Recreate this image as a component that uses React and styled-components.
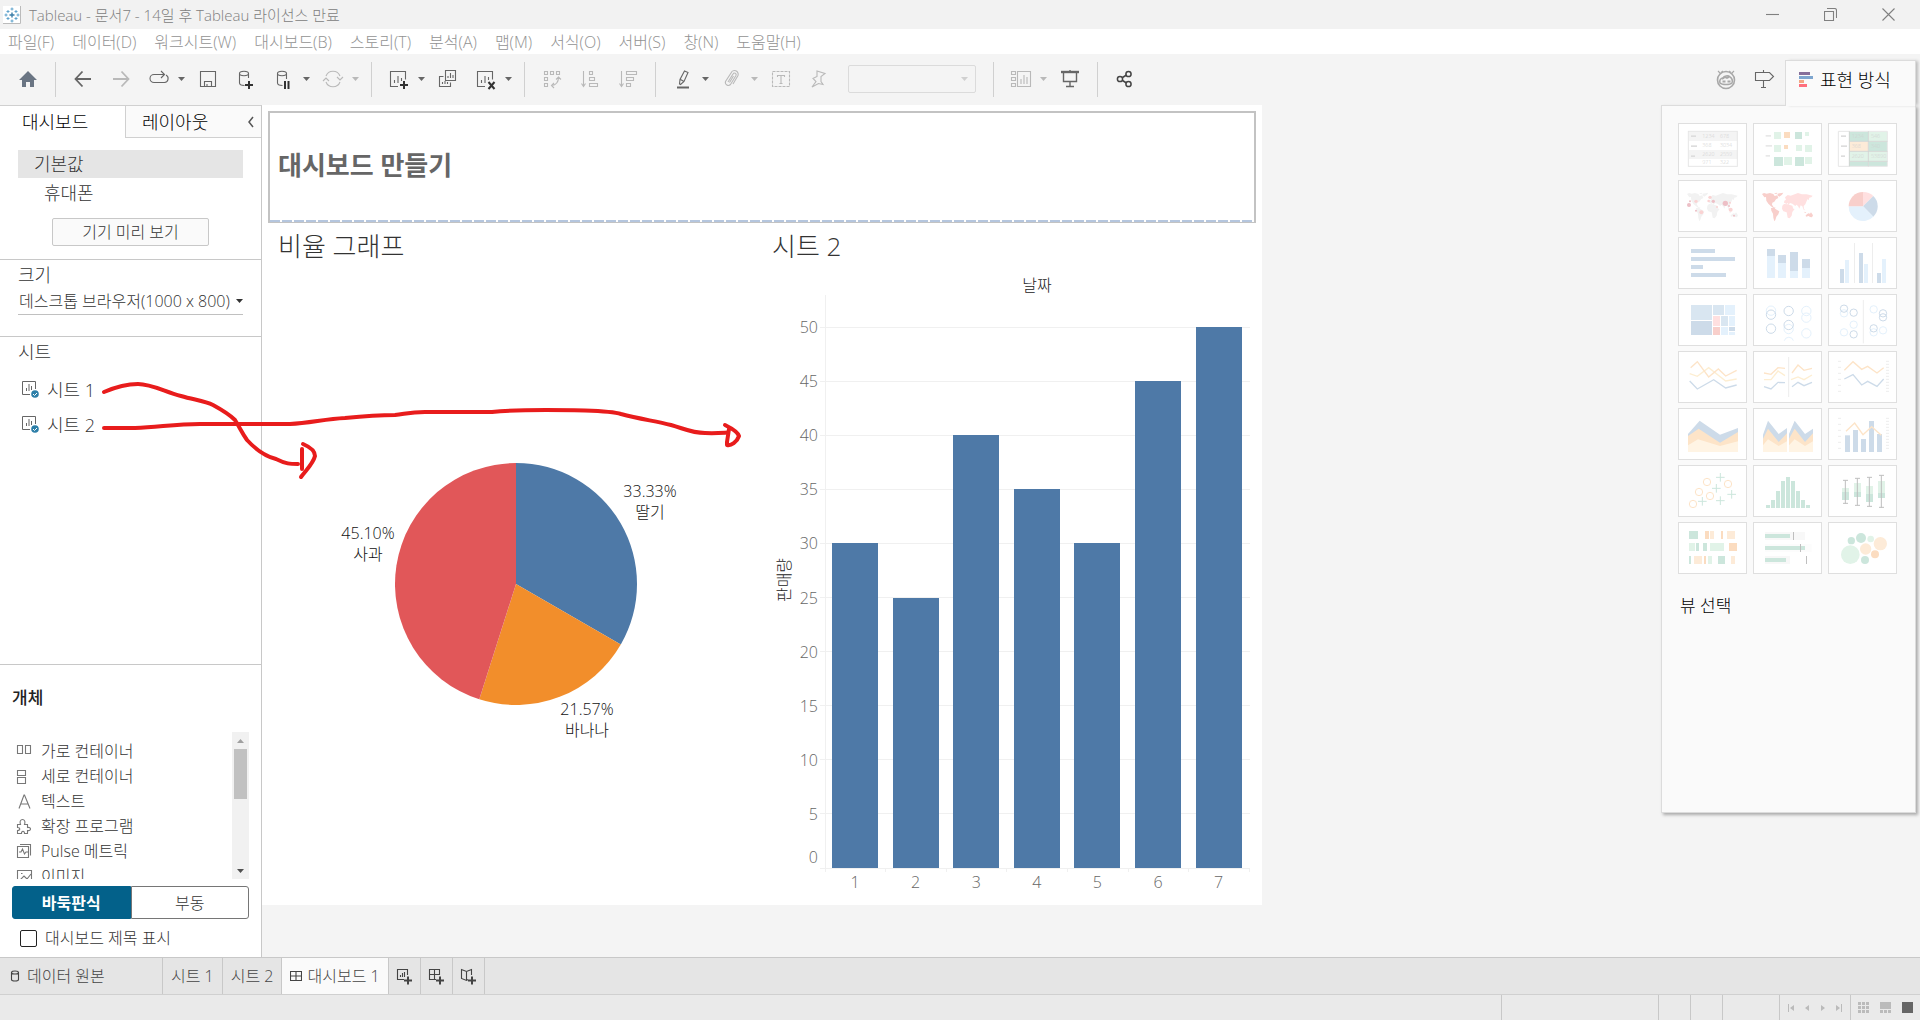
import { useState } from "react"
import styled, { createGlobalStyle } from "styled-components"

const GlobalStyle = createGlobalStyle`
  * {
    box-sizing: border-box;
  }

  body {
    margin: 0;
    background: #f4f4f4;
    color: #333;
    font-family: "Open Sans", "Noto Sans CJK KR", sans-serif;
    font-size: 16px;
    font-weight: 300;
    line-height: 24px;
  }

  button, select, input {
    font: inherit;
    color: inherit;
  }

  button {
    padding: 0;
    border: none;
    background: transparent;
    cursor: pointer;
  }

  svg {
    display: block;
    flex-shrink: 0;
  }
`

const Window = styled.div`
  min-height: 100vh;
  display: flex;
  flex-direction: column;
`

const TitleBar = styled.header`
  height: 29px;
  display: flex;
  align-items: center;
  gap: 8px;
  padding: 0 3px;
  background: #f2f2f2;
  color: #808080;
`

const WindowTitle = styled.h1`
  flex: 1;
  margin: 0;
  font-size: 15px;
  font-weight: 300;
`

const WindowButtons = styled.div`
  display: flex;
`

const WindowButton = styled.button`
  width: 58px;
  height: 29px;
  display: flex;
  align-items: center;
  justify-content: center;
`

const MenuBar = styled.nav`
  height: 25px;
  display: flex;
  align-items: center;
  gap: 18px;
  padding-left: 8px;
  background: #fff;
`

const MenuItem = styled.button`
  color: #929292;
  white-space: nowrap;
`

const ToolBar = styled.div`
  height: 51px;
  display: flex;
  align-items: center;
  padding: 0 4px 1px 9px;
  background: #f4f4f4;
`

const ToolButton = styled.button`
  width: 38px;
  height: 32px;
  display: flex;
  align-items: center;
  justify-content: center;
  color: ${(props) => (props.disabled ? "#b9b9b9" : "#666")};
`

const CaretButton = styled.button`
  width: 11px;
  height: 32px;
  display: flex;
  align-items: center;
  color: ${(props) => (props.disabled ? "#b9b9b9" : "#666")};
`

const Separator = styled.span`
  width: 1px;
  height: 35px;
  margin: 0 8px;
  background: #d0d0d0;
`

const FitSelect = styled.span`
  position: relative;
  width: 128px;
  height: 28px;
  margin: 0 9px 0 10px;
  color: #d0d0d0;

  select {
    display: block;
    width: 100%;
    height: 100%;
    appearance: none;
    border: 1px solid #d0d0d0;
    border-radius: 2px;
    background: transparent;
  }

  svg {
    position: absolute;
    right: 8px;
    top: 12px;
  }
`

const Spacer = styled.span`
  flex: 1;
`

const ShowMeTab = styled.button`
  position: relative;
  z-index: 1;
  align-self: flex-end;
  width: 131px;
  height: 46px;
  margin: 0 0 -2px 2px;
  display: flex;
  align-items: center;
  gap: 6px;
  padding: 0 0 7px 13px;
  border: 1px solid #dcdcdc;
  border-bottom: none;
  background: #fafafa;
  box-shadow: 3px 0 3px -1px #bbb;
  color: #000;
  font-size: 18px;
  white-space: nowrap;
`

const Main = styled.main`
  position: relative;
  flex: 1;
  display: flex;
  align-items: flex-start;
`

const Side = styled.aside`
  width: 262px;
  align-self: stretch;
  display: flex;
  flex-direction: column;
  border-top: 1px solid #d0d0d0;
  border-right: 1px solid #c8c8c8;
  background: #fff;
`

const SideTabs = styled.div`
  display: flex;
  height: 32px;
  color: #000;
  font-size: 18px;
`

const SideTab = styled.button`
  width: ${(props) => (props.$active ? "125px" : "auto")};
  flex: ${(props) => (props.$active ? "none" : 1)};
  padding-left: ${(props) => (props.$active ? "22px" : "16px")};
  border-left: ${(props) => (props.$active ? "none" : "1px solid #d0d0d0")};
  border-bottom: ${(props) => (props.$active ? "none" : "1px solid #d0d0d0")};
  background: ${(props) => (props.$active ? "#fff" : "#fafafa")};
  text-align: left;
  white-space: nowrap;
`

const CollapseButton = styled.button`
  width: 20px;
  display: flex;
  align-items: center;
  justify-content: center;
  border-bottom: 1px solid #d0d0d0;
  background: #fafafa;
  color: #555;
`

const Section = styled.section`
  padding: 3px 18px 21px;
  border-bottom: 1px solid #c8c8c8;
`

const DeviceSection = styled(Section)`
  display: flex;
  flex-direction: column;
  padding: 12px 18px 13px;
`

const SheetSection = styled(Section)`
  flex: 1;
`

const SectionTitle = styled.h2`
  margin: 0;
  font-size: 18px;
  font-weight: 300;
`

const Device = styled.button`
  height: 28px;
  margin-bottom: 1px;
  padding-left: ${(props) => (props.$active ? "16px" : "26px")};
  background: ${(props) => (props.$active ? "#e5e5e5" : "transparent")};
  font-size: 18px;
  text-align: left;
`

const PreviewButton = styled.button`
  width: 157px;
  height: 28px;
  margin-top: 10px;
  align-self: center;
  border: 1px solid #c8c8c8;
  border-radius: 2px;
  background: #fafafa;
`

const SizeSelect = styled.div`
  position: relative;
  height: 27px;
  margin-top: 1px;
  border-bottom: 1px solid #c0c0c0;

  select {
    display: block;
    width: 100%;
    height: 26px;
    padding: 0 0 0 1px;
    appearance: none;
    border: none;
    background: transparent;
  }

  svg {
    position: absolute;
    right: 0;
    top: 11px;
  }
`

const SheetList = styled.ul`
  margin: 8px 0 0;
  padding: 0 4px;
  list-style: none;
  font-size: 18px;
`

const SheetItem = styled.li`
  height: 35px;
  display: flex;
  align-items: center;
  gap: 8px;
`

const ObjectSection = styled.section`
  padding: 21px 12px 5px;
`

const ObjectTitle = styled.h2`
  margin: 0 0 22px;
  color: #222;
  font-size: 17px;
  font-weight: 500;
`

const ObjectBox = styled.div`
  height: 147px;
  display: flex;
  overflow: hidden;
`

const ObjectList = styled.ul`
  flex: 1;
  margin: 0;
  padding: 6px 0 0 4px;
  list-style: none;
`

const ObjectItem = styled.li`
  height: 25px;
  display: flex;
  align-items: center;
  gap: 8px;

  svg {
    color: #777;
  }
`

const ScrollBar = styled.div`
  width: 17px;
  display: flex;
  flex-direction: column;
  align-items: center;
  background: #f1f1f1;
  color: #a0a0a0;

  svg {
    margin: 7px 0 6px;
  }

  svg:last-child {
    margin-top: auto;
    color: #505050;
  }
`

const ScrollThumb = styled.span`
  width: 13px;
  height: 50px;
  background: #c1c1c1;
`

const LayoutSwitch = styled.div`
  height: 33px;
  display: flex;
  margin-top: 7px;
`

const LayoutButton = styled.button`
  flex: 1;
  border: 1px solid ${(props) => (props.$active ? "#03618a" : "#767676")};
  border-radius: ${(props) => (props.$active ? "3px 0 0 3px" : "0 3px 3px 0")};
  background: ${(props) => (props.$active ? "#03618a" : "#fff")};
  color: ${(props) => (props.$active ? "#fff" : "#333")};
  font-weight: ${(props) => (props.$active ? 700 : 300)};
`

const CheckLabel = styled.label`
  height: 28px;
  display: flex;
  align-items: center;
  gap: 8px;
  margin-top: 5px;
  padding-left: 8px;

  input {
    width: 17px;
    height: 17px;
    margin: 0;
    appearance: none;
    border: 1px solid #222;
    border-radius: 2px;
    background: #fff;
  }

  input:checked {
    background: #03618a;
  }
`

const Workspace = styled.div`
  flex: 1;
`

/* the dashboard has the "desktop browser" size chosen in the side panel */
const Dashboard = styled.article`
  width: 1000px;
  height: 800px;
  padding: 6px;
  background: #fff;
`

const TitleZone = styled.div`
  position: relative;
  height: 112px;
  display: flex;
  align-items: center;
  padding-left: 8px;
  border: 2px solid #c3c3c3;
  border-bottom-width: 1px;

  &::after {
    content: "";
    position: absolute;
    left: 0;
    right: 0;
    bottom: 0;
    height: 2px;
    background: repeating-linear-gradient(90deg, #b5c6de 0 10px, #fff 10px 12px);
  }

  h2 {
    margin: 0;
    padding-bottom: 6px;
    color: #666;
    font-size: 26px;
    font-weight: 700;
    line-height: 36px;
  }
`

const SheetRow = styled.div`
  display: grid;
  grid-template-columns: 1fr 1fr;
`

const SheetZone = styled.section`
  padding: 7px 0 0;

  h3 {
    margin: 0 0 2px;
    padding-left: 10px;
    font-size: 26px;
    font-weight: 300;
    line-height: 32px;
  }
`

const Chart = styled.svg`
  width: 100%;
  fill: #333;
`

const AxisText = styled.text`
  fill: #666;
  font-size: 16px;
`

const AxisTitle = styled.text`
  fill: #222;
  font-size: 16px;
  text-anchor: middle;
`

const MarkText = styled.text`
  fill: #111;
  font-size: 16px;
  text-anchor: middle;
`

const Ink = styled.svg`
  position: absolute;
  left: 0;
  top: 0;
  pointer-events: none;
  fill: none;
  stroke: #e81c1c;
  stroke-width: 4;
  stroke-linecap: round;
  stroke-linejoin: round;
`

const ShowMe = styled.aside`
  width: 255px;
  height: 708px;
  margin-right: 4px;
  padding: 17px 17px 0 16px;
  border: 1px solid #dcdcdc;
  background: #fafafa;
  box-shadow: 2px 2px 3px #aaa;
  color: #000;
`

const ThumbGrid = styled.div`
  display: grid;
  grid-template-columns: repeat(3, 69px);
  gap: 5px 6px;
`

const Thumb = styled.button`
  height: 52px;
  border: 1px solid #dfdfdf;
  background: #fff;
`

const ShowMeHint = styled.p`
  margin: 20px 2px;
  font-size: 17px;
`

const SheetTabs = styled.div`
  height: 38px;
  display: flex;
  border-top: 1px solid #c8c8c8;
  border-bottom: 1px solid #d0d0d0;
  background: #e5e5e5;
  color: #444;
`

const SheetTab = styled.button`
  min-width: ${(props) => (props.$wide ? "163px" : "32px")};
  display: flex;
  align-items: center;
  justify-content: ${(props) => (props.$wide ? "flex-start" : "center")};
  gap: 5px;
  padding: 0 ${(props) => (props.$icon ? "4px" : "8px")};
  border-right: 1px solid #c8c8c8;
  background: ${(props) => (props.$active ? "#fafafa" : "transparent")};
  white-space: nowrap;
`

const StatusBar = styled.footer`
  height: 25px;
  display: flex;
  justify-content: flex-end;
  background: #eaeaea;
  color: #bbb;
`

const StatusCell = styled.div`
  width: ${(props) => props.$width}px;
  display: flex;
  align-items: center;
  justify-content: space-between;
  padding: 0 ${(props) => props.$pad || 0}px;
  border-left: 1px solid #c8c8c8;
`

const Icon = ({ size = 24, children, width = 1.1 }) => (
  <svg width={size} height={size} viewBox={`0 0 ${size} ${size}`} fill="none" stroke="currentColor" strokeWidth={width}>
    {children}
  </svg>
)

const Caret = ({ up }) => (
  <svg width="7" height="4" viewBox="0 0 7 4" fill="currentColor">
    <path d={up ? "M0 4h7L3.5 0z" : "M0 0h7L3.5 4z"} />
  </svg>
)

const Plus = ({ x, y }) => <path d={`M${x - 4} ${y}h8M${x} ${y - 4}v8`} strokeWidth="2" stroke="#333" />

const icons = {
  home: <path d="M12 4l9 9h-3v7h-4v-5h-4v5H6v-7H3z" fill="#6a7583" stroke="none" />,
  back: <path d="M20 12H5M11.500 4.500L4.500 12l7 7.500" strokeWidth="1.800" />,
  forward: <path d="M4 12h15M12.500 4.500l7 7.500-7 7.500" strokeWidth="1.800" />,
  redo: <path d="M8 7.500H7a4 4 0 0 0 0 8h10.500a4 4 0 0 0 1.500-7.500M8 7.500h9M14 4l3.500 3.500L14 11" />,
  save: <path d="M4.500 4.500h15v15h-15zM8.500 19.500v-5h7v5M11 17v2" />,
  addData: (
    <>
      <path d="M14.500 11V6.500c0-3-9-3-9 0v9.500c0 1.500 2 2.500 5 2.500M5.500 6.500c0 3 9 3 9 0" />
      <Plus x={15} y={18} />
    </>
  ),
  pauseData: (
    <>
      <path d="M14.500 12V6.500c0-3-9-3-9 0v9.500c0 1.500 2 2.500 5 2.500M5.500 6.500c0 3 9 3 9 0" />
      <path d="M13 14v8M16.500 14v8" strokeWidth="2" stroke="#333" />
    </>
  ),
  refresh: <path d="M5 9a7.500 7.500 0 0 1 14 0M19 15a7.500 7.500 0 0 1-14 0M2 14l3-3 3 3M22 10l-3 3-3-3" />,
  newSheet: (
    <>
      <path d="M11 19.500H3.500v-15h15v8M7.500 16v-3M11 16V9M14.500 14v-3" />
      <Plus x={17} y={18} />
    </>
  ),
  duplicate: <path d="M9.500 3.500h10v10h-10zM12 11V9M14.500 11V6M17 11V8M7.500 9.500h-4v10h11v-4M6.500 17v-2M9 17v-3M11.500 17v-2" />,
  clear: (
    <>
      <path d="M11 19.500H3.500v-15h15v8M7.500 16v-3M11 16V9M14.500 13v-3" />
      <path d="M14.500 15l6 7M20.500 15l-6 7" strokeWidth="2" stroke="#333" />
    </>
  ),
  swap: <path d="M4.500 4.500h3v3h-3zM10.500 4.500h3v3h-3zM16.500 4.500h3v3h-3zM4.500 10.500h3v3h-3zM4.500 16.500h3v3h-3zM18.500 10c0 5-2 8-7 8.500M16 12.500l2.500-2.500 2.500 2.500M14 16l-2.500 2.500 2.500 2.500" />,
  sortAsc: <path d="M5.500 4v15M3.500 16.500l2 3 2-3M11.500 4.500h3v3h-3zM11.500 10.500h5v3h-5zM11.500 16.500h8v3h-8z" />,
  sortDesc: <path d="M5.500 4v15M3.500 16.500l2 3 2-3M10.500 4.500h10v3h-10zM10.500 10.500h7v3h-7zM10.500 16.500h4v3h-4z" />,
  highlight: (
    <>
      <path d="M13.500 4l3.500 1.500-4 9-3.500 3-1-.5.500-4.500zM9.500 12.500l3.500 2" />
      <path d="M6 20.500h12" strokeWidth="2" />
    </>
  ),
  clip: <path d="M8 15l5-8a1.500 1.500 0 0 1 3 1.500l-5.500 9a3 3 0 0 1-5-3L11 6a3.500 3.500 0 0 1 7 2.500L13 17M9.500 15.500l4-6.500" />,
  label: (
    <>
      <path d="M3.500 4.500h17v15h-17z" strokeDasharray="3 1" />
      <path d="M8.500 10V8.500h7V10M12 8.500v8M10.500 16.500h3" />
    </>
  ),
  pin: <path d="M10 4l8 2.500-4 3v5l2 3-4.500-1L5 20l4-5.500-3-3 4-2z" />,
  cards: <path d="M2.500 4.500h4v3h-4zM2.500 10.500h4v3h-4zM2.500 16.500h4v3h-4zM8.500 4.500h13v15h-13zM12 17v-5M15 17V8M18 17v-7" />,
  present: (
    <>
      <path d="M3 5h18" strokeWidth="2.400" />
      <path d="M5.500 6v8.500h13V6M12 14.500v5M8 19.500h8M12 3v2" strokeWidth="1.400" />
    </>
  ),
  share: (
    <g strokeWidth="1.500" stroke="#444">
      <circle cx="7" cy="12" r="2.600" />
      <circle cx="15.500" cy="7" r="2.600" />
      <circle cx="15.500" cy="17" r="2.600" />
      <path d="M9.500 10.500l4-2.500M9.500 13.500l4 2.500" />
    </g>
  ),
  einstein: (
    <g stroke="#a8a8a8">
      <circle cx="12" cy="13" r="8.500" strokeWidth="1.600" />
      <path d="M4 4l3 3M20 4l-3 3M7 5.500l2-1.500M17 5.500l-2-1.500" />
      <path d="M6 16c-1-3 1-5 3-5 1-2 5-3 7-1 2 1 3 4 2 6-2 2-10 2-12 0z" strokeWidth="1.600" />
      <path d="M8.500 14.500h3M13.500 14.500h3M8 12l3-2 2 1 2-1" strokeWidth="1.800" />
    </g>
  ),
  signpost: <path d="M11.500 3v3M3.500 5.500h14l4 4-4 4h-14zM11.500 13.500v7M9 20.500h5" />,
}

const Tool = ({ name, label, disabled, caret }) => (
  <>
    <ToolButton disabled={disabled} aria-label={label}>
      <Icon>{icons[name]}</Icon>
    </ToolButton>
    {caret && (
      <CaretButton disabled={disabled} aria-label={`${label} 옵션`}>
        <Caret />
      </CaretButton>
    )}
  </>
)

const TableauLogo = () => (
  <svg width="18" height="18" viewBox="0 0 18 18" fill="none">
    <path d="M0 0h18v18H0z" fill="#fff" />
    <path d="M17.500 0v17.500H0" stroke="#bbb" />
    <path d="M9 6.500v5M6.500 9h5" stroke="#3b7ea8" strokeWidth="1.400" />
    <path
      d="M9 1.500v3M7.500 3h3M9 13.500v3M7.500 15h3M3 7.500v3M1.500 9h3M15 7.500v3M13.500 9h3M5 4v3M3.500 5.500h3M13 4v3M11.500 5.500h3M5 11v3M3.500 12.500h3M13 11v3M11.500 12.500h3"
      stroke="#5fa3cc"
    />
  </svg>
)

const SheetIcon = () => (
  <svg width="17" height="17" viewBox="0 0 17 17" fill="none" stroke="#666">
    <path d="M8 13.500H.500V.500h13V8M4.500 10V7M7 10V3M9.500 9V5" />
    <circle cx="13" cy="13" r="3.800" fill="#2d7fa8" stroke="none" />
    <path d="M11 13l1.500 1.500L15 12" stroke="#fff" />
  </svg>
)

const objectItems = [
  { label: "가로 컨테이너", icon: <path d="M1.500 3.500h5v8h-5zM9.500 3.500h5v8h-5z" /> },
  { label: "세로 컨테이너", icon: <path d="M1.500 3.500h8v5h-8zM1.500 10.500h8v6h-8z" /> },
  { label: "텍스트", icon: <path d="M3 16.500L8 3h.500L14 16.500M5 12h7" /> },
  {
    label: "확장 프로그램",
    icon: <path d="M1.500 7.500h3c-1-3 0-5 2-5s3 2 2 5h3v3c4-1 4 4 0 3v3h-3c0-3-3-3-3 0h-4v-3c3 0 3-3 0-3z" />,
  },
  { label: "Pulse 메트릭", icon: <path d="M1.500 4.500h11v11h-11zM4 2.500h10.500v11M3 10h2l1.500-3 2 5 1.500-2h2" /> },
  { label: "이미지", icon: <path d="M1.500 3.500h14v12h-14zM4 13l4-4 3 3 4-5M5 6.500h1.500" /> },
]

const menus = ["파일(F)", "데이터(D)", "워크시트(W)", "대시보드(B)", "스토리(T)", "분석(A)", "맵(M)", "서식(O)", "서버(S)", "창(N)", "도움말(H)"]

const sales = [30, 25, 40, 35, 30, 45, 50]
const ticks = [50, 45, 40, 35, 30, 25, 20, 15, 10, 5, 0]

const BarChart = () => {
  const left = 63
  const base = 604
  const step = 60.6
  const scale = 10.82

  return (
    <Chart viewBox="0 0 494 630" role="img" aria-label="날짜별 판매량">
      <AxisTitle x="275" y="27">날짜</AxisTitle>
      <AxisTitle transform="translate(28 316) rotate(-90)">판매량</AxisTitle>
      <g stroke="#f0f0f0" shapeRendering="crispEdges">
        {ticks.map((tick) => (
          <line key={tick} x1="58" x2="488" y1={base - tick * scale} y2={base - tick * scale} />
        ))}
        <line x1={left} x2={left} y1="31" y2={base + 4} />
        {sales.map((_, i) => (
          <line key={i} x1={left + step * (i + 1)} x2={left + step * (i + 1)} y1={base} y2={base + 4} />
        ))}
      </g>
      {ticks.map((tick) => (
        <AxisText key={tick} x="56" y={tick ? base - tick * scale + 6 : base - 5} textAnchor="end">
          {tick}
        </AxisText>
      ))}
      {sales.map((value, i) => (
        <g key={i}>
          <rect
            x={Math.round(left + step * i + 7)}
            y={base - value * scale}
            width="46"
            height={value * scale}
            fill="#4e79a7"
            shapeRendering="crispEdges"
          />
          <AxisText x={left + step * i + 30} y="624" textAnchor="middle">
            {i + 1}
          </AxisText>
        </g>
      ))}
    </Chart>
  )
}

const PieChart = () => (
  <Chart viewBox="0 0 494 630" role="img" aria-label="과일 비율">
    <path d="M248 320V199a121 121 0 0 1 104.800 181.500z" fill="#4e79a7" />
    <path d="M248 320l104.800 60.500a121 121 0 0 1-141.500 54.800z" fill="#f28e2b" />
    <path d="M248 320l-36.700 115.300A121 121 0 0 1 248 199z" fill="#e15759" />
    <MarkText x="382" y="233">33.33%</MarkText>
    <MarkText x="382" y="254">딸기</MarkText>
    <MarkText x="100" y="275">45.10%</MarkText>
    <MarkText x="100" y="296">사과</MarkText>
    <MarkText x="319" y="451">21.57%</MarkText>
    <MarkText x="319" y="472">바나나</MarkText>
  </Chart>
)

/* colours of the chart type pictures */
const blue = "#cddbe9"
const sky = "#e4f1fc"
const mist = "#d9e6f1"
const green = "#cce6dc"
const mint = "#e1f3e8"
const peach = "#fdebd8"
const orange = "#fbdcc0"
const sand = "#fde4c8"
const cream = "#fff4e4"
const rose = "#f8cfcb"
const pink = "#ffe0e0"
const grey = "#ededed"

const Rects = ({ list }) => list.map(([x, y, w, h, fill], i) => <rect key={i} x={x} y={y} width={w} height={h} fill={fill} />)

const Rings = ({ list, r, width = 3 }) =>
  list.map(([x, y, stroke], i) => <circle key={i} cx={x} cy={y} r={r} fill="none" stroke={stroke} strokeWidth={width} />)

const Lines = ({ list }) =>
  list.map(([points, stroke], i) => <polyline key={i} points={points} fill="none" stroke={stroke} strokeWidth="4" />)

const Areas = ({ list }) => list.map(([points, fill], i) => <polygon key={i} points={points} fill={fill} />)

const Cells = ({ rows, x, y, step }) => (
  <g fontSize="16" fill="#d0d0d0">
    {rows.map((row, i) => row.map((cell, j) => <text key={cell} x={x[j]} y={y + step * i}>{cell}</text>))}
  </g>
)

const ScaleTicks = () => (
  <path
    d="M30 31h9M30 49h9M30 67h9M30 85h9M30 103h9M30 121h9M174 31h9M174 40h9M174 49h9M174 58h9M174 67h9M174 76h9M174 85h9M174 94h9M174 103h9M174 112h9M174 121h9"
    stroke={grey}
    strokeWidth="3"
  />
)

const americas =
  "M27 42l6-3 8 2 10-2 10 3 4 6 8-2 3 8-7 4-5 7-6 3-1 6 5 8 6 1-4 3-10-7-8-8-6-9-1-11-5 1zM63 40l10-2-3 5zM73 41l18-3-4 6-8 6-4-3zM54 84l8-1 9 6 8 5-3 9-6 7-3 10-3 4-3-11-1-12-5-9z"
const eurasia =
  "M93 68l1-6 5-3-3-7 8-7 9 2 12-4 10-4 12 4 14 0 18 4-4 5-6 1-2 8-3-4-4 8-3 8-5 5 1 8 3 5-4-2-4-10-5-3-4 10-4-8-5-4-3 4-9-7-7-2-4 5-3-5-3 3zM88 77l5-5 11 1 14 4 3 9 4 1-7 9-2 11-6 8-6-2-3-16-10-3-4-8z"
const australia = "M158 106l8-6 5 1 3-4 6 9-3 6-6-1-4-3-8 2zM152 95l8 2-3 2z"

const thumbs = [
  {
    label: "텍스트 테이블",
    art: (
      <>
        <Rects list={[[33, 27, 144, 27, "#f4f4f4"], [33, 81, 144, 27, "#f4f4f4"], [39, 37, 15, 5, "#ddd"], [39, 67, 18, 5, "#ddd"], [39, 97, 12, 5, "#ddd"]]} />
        <rect x="31" y="25" width="147" height="105" fill="none" stroke="#e6e6e6" strokeWidth="3" />
        <Cells rows={[["1234", "678"], ["368", "3034"], ["2620", "2559"], ["971", "322"]]} x={[73, 126]} y={46} step={26} />
      </>
    ),
  },
  {
    label: "히트맵",
    art: (
      <Rects
        list={[
          [38, 36, 16, 5, "#e8e8e8"], [38, 66, 19, 5, "#e8e8e8"], [38, 96, 13, 5, "#e8e8e8"],
          [63, 27, 21, 21, mint], [93, 27, 18, 18, orange], [126, 27, 21, 21, green], [156, 27, 12, 12, mint],
          [63, 66, 21, 21, mint], [93, 66, 12, 12, orange], [129, 66, 18, 18, mint], [156, 66, 21, 21, mint],
          [63, 102, 27, 27, green], [93, 102, 24, 24, mint], [126, 102, 27, 27, green], [156, 102, 21, 21, mint],
        ]}
      />
    ),
  },
  {
    label: "하이라이트 테이블",
    art: (
      <>
        <Rects
          list={[
            [63, 27, 57, 27, green], [123, 27, 54, 27, mint], [63, 57, 57, 27, peach], [123, 57, 54, 27, green],
            [63, 87, 57, 27, mint], [123, 87, 54, 27, mint], [63, 117, 57, 12, green], [123, 117, 54, 12, green],
            [39, 37, 15, 5, "#ddd"], [39, 67, 18, 5, "#ddd"], [39, 97, 12, 5, "#ddd"],
          ]}
        />
        <path d="M31 25h147v105H31z" fill="none" stroke="#e6e6e6" strokeWidth="3" />
        <path d="M64 25v105M121 25v105M64 55h114M64 85h114M64 115h114" stroke="#d0d5d2" strokeWidth="3" />
        <Cells rows={[["1234", "546"], ["368", "340"], ["2620", "53890"]]} x={[71, 129]} y={46} step={30} />
      </>
    ),
  },
  {
    label: "기호 맵",
    art: (
      <>
        <path d={americas + eurasia + australia} fill="#f2f2f2" />
        {[[33, 75, 6, 1], [36, 64, 3, 1], [54, 64, 5], [96, 52, 5], [92, 63, 4], [106, 64, 5, 1], [142, 70, 8, 1], [156, 68, 3], [117, 81, 3], [153, 78, 3, 1], [158, 89, 6], [168, 107, 3, 1], [54, 92, 3, 1], [70, 97, 6]].map(([x, y, r, dark]) => (
          <circle key={`${x}-${y}`} cx={x} cy={y} r={r} fill={dark ? "#edbfc6" : "#fad3d3"} />
        ))}
      </>
    ),
  },
  {
    label: "맵",
    art: (
      <>
        <path d={americas + australia} fill={rose} />
        <path d={eurasia} fill={pink} />
      </>
    ),
  },
  {
    label: "파이 차트",
    art: (
      <>
        <path d="M105 79V36a43 43 0 0 1 31 12z" fill={pink} />
        <path d="M105 79l31-31a43 43 0 0 1 0 62z" fill={blue} />
        <path d="M105 79l31 31A43 43 0 0 1 62 79z" fill={sky} />
        <path d="M105 79H62a43 43 0 0 1 43-43z" fill={rose} />
      </>
    ),
  },
  { label: "가로 막대", art: <Rects list={[[39, 36, 72, 12, blue], [39, 60, 132, 12, blue], [39, 84, 36, 12, blue], [39, 108, 105, 12, blue]]} /> },
  {
    label: "누적 막대",
    art: (
      <Rects
        list={[
          [42, 36, 24, 21, blue], [42, 57, 24, 66, sky], [75, 54, 24, 24, blue], [75, 78, 24, 45, sky],
          [111, 45, 24, 57, blue], [111, 102, 24, 21, sky], [147, 66, 24, 27, blue], [147, 93, 24, 30, sky],
        ]}
      />
    ),
  },
  {
    label: "병렬 막대",
    art: (
      <Rects
        list={[
          [78, 18, 3, 120, grey], [132, 18, 3, 120, grey],
          [36, 96, 12, 42, blue], [51, 69, 12, 69, sky], [93, 48, 12, 90, blue],
          [108, 81, 12, 57, sky], [147, 108, 12, 30, blue], [162, 66, 12, 72, sky],
        ]}
      />
    ),
  },
  {
    label: "트리맵",
    art: (
      <Rects
        list={[
          [39, 33, 63, 45, mist], [39, 81, 63, 42, blue], [105, 33, 33, 30, mist], [141, 33, 30, 30, sky],
          [105, 66, 21, 30, pink], [105, 99, 21, 24, rose], [129, 66, 21, 30, mist], [153, 66, 18, 30, sky],
          [129, 99, 21, 24, sky], [153, 99, 18, 12, blue], [153, 114, 18, 9, sky],
        ]}
      />
    ),
  },
  {
    label: "원",
    art: (
      <>
        <Rings r={14} list={[[54, 50, sky], [54, 62, blue], [54, 104, blue], [107, 51, blue], [107, 105, sky], [107, 93, blue], [160, 51, sky], [160, 71, sky], [160, 118, sky]]} />
        <path d="M94 140a14 14 0 0 1 27 0" fill="none" stroke={sky} strokeWidth="3" />
      </>
    ),
  },
  {
    label: "병렬 원",
    art: (
      <>
        <path d="M106 18v130" stroke={grey} strokeWidth="3" />
        <Rings
          r={11}
          list={[[48, 58, sky], [48, 44, blue], [77, 56, blue], [77, 92, sky], [48, 115, sky], [77, 121, blue], [137, 46, sky], [165, 70, blue], [165, 58, blue], [137, 115, sky], [137, 103, blue], [165, 109, sky]]}
        />
      </>
    ),
  },
  {
    label: "라인(연속형)",
    art: <Lines list={[["35,68 58,76 92,50 143,90 176,84", "#fdeed2"], ["38,50 58,32 92,78 121,54 143,75 176,58", sand], ["35,90 58,114 107,86 143,111 176,102", blue]]} />,
  },
  {
    label: "라인(불연속형)",
    art: (
      <>
        <path d="M107 18v120" stroke={grey} strokeWidth="3" />
        <Lines
          list={[
            ["33,86 54,86 75,60 96,74", "#fdeed2"], ["114,86 135,78 153,86 177,72", "#fdeed2"],
            ["33,66 54,70 75,50 96,52", sand], ["117,66 135,42 153,58 177,52", sand],
            ["33,107 54,114 75,94 96,95", blue], ["117,107 135,94 153,104 177,94", blue],
          ]}
        />
      </>
    ),
  },
  {
    label: "이중 라인",
    art: (
      <>
        <ScaleTicks />
        <Lines list={[["49,58 75,32 101,55 119,46 147,66 167,50", sand], ["49,84 75,71 101,102 119,91 147,106 167,84", blue]]} />
      </>
    ),
  },
  {
    label: "영역 차트(연속형)",
    art: (
      <Areas
        list={[
          ["30,78 65,38 126,80 180,60 180,132 30,132", blue],
          ["30,84 62,62 126,104 180,72 180,132 30,132", sand],
          ["30,112 60,94 126,114 180,100 180,132 30,132", cream],
        ]}
      />
    ),
  },
  {
    label: "영역 차트(불연속형)",
    art: (
      <Areas
        list={[
          ["30,80 45,38 77,78 102,60 102,132 30,132", blue], ["108,78 125,38 156,78 180,62 180,132 108,132", blue],
          ["30,92 45,62 77,102 102,76 102,132 30,132", sand], ["108,92 125,62 156,102 180,76 180,132 108,132", sand],
          ["30,112 45,94 77,114 102,100 102,132 30,132", cream], ["108,112 125,94 156,114 180,100 180,132 108,132", cream],
        ]}
      />
    ),
  },
  {
    label: "이중 조합",
    art: (
      <>
        <ScaleTicks />
        <Rects list={[[51, 82, 15, 50, blue], [75, 66, 15, 66, blue], [99, 93, 15, 39, blue], [123, 39, 15, 93, blue], [147, 78, 15, 54, blue]]} />
        <Lines list={[["54,70 80,45 105,80 131,56 160,82", sand]]} />
      </>
    ),
  },
  {
    label: "분산형 차트",
    art: (
      <>
        <Rings r={11} list={[[87, 51, sand], [150, 57, sand], [63, 81, sand], [96, 93, sand], [45, 117, sand]]} />
        <path d="M114 37h26M127 24v26M102 70h26M115 57v26M148 88h26M161 75v26M60 109h26M73 96v26M114 107h26M127 94v26" stroke={green} strokeWidth="3" />
      </>
    ),
  },
  { label: "히스토그램", art: <Rects list={[120, 105, 78, 48, 36, 48, 78, 105, 120].map((y, i) => [39 + i * 15, y, 12, 129 - y, green])} /> },
  {
    label: "박스 플롯",
    art: (
      <>
        <Rects
          list={[
            [42, 69, 21, 12, mint], [42, 81, 21, 24, green], [78, 54, 21, 27, mint], [78, 81, 21, 15, green],
            [114, 63, 21, 24, mint], [114, 87, 21, 24, green], [150, 48, 21, 36, mint], [150, 84, 21, 15, green],
          ]}
        />
        <path
          d="M52 46v70M45 46h15M45 115h15M88 40v81M81 40h15M81 121h15M124 37v87M117 37h15M117 124h15M160 31v97M153 31h15M153 127h15"
          stroke="#bfbfbf"
          strokeWidth="3"
        />
      </>
    ),
  },
  {
    label: "간트 뷰",
    art: (
      <Rects
        list={[
          [33, 27, 27, 24, green], [81, 27, 12, 24, orange], [96, 27, 12, 24, peach], [129, 27, 6, 24, orange], [147, 27, 24, 24, peach],
          [33, 63, 18, 24, mint], [54, 63, 9, 24, green], [75, 63, 12, 24, green], [96, 63, 42, 24, mint], [153, 63, 24, 24, orange],
          [33, 102, 6, 24, green], [48, 102, 24, 24, peach], [78, 102, 6, 24, orange], [90, 102, 12, 24, mint], [120, 102, 21, 24, green], [159, 102, 12, 24, peach],
        ]}
      />
    ),
  },
  {
    label: "불릿 그래프",
    art: (
      <Rects
        list={[
          [36, 30, 120, 24, "#f8f8f8"], [36, 66, 140, 24, "#fcfcfc"], [36, 102, 75, 24, "#f8f8f8"],
          [36, 36, 75, 12, green], [36, 72, 120, 12, green], [36, 108, 63, 12, green],
          [120, 30, 3, 24, "#bfbfbf"], [141, 66, 3, 24, "#bfbfbf"], [159, 102, 3, 24, "#bfbfbf"],
        ]}
      />
    ),
  },
  {
    label: "채워진 버블 차트",
    art: (
      <>
        {[[67, 98, 28, mint], [99, 48, 15, green], [70, 56, 11, green], [128, 51, 10, mint], [157, 65, 20, peach], [113, 81, 17, peach], [141, 97, 12, orange], [111, 114, 12, green]].map(([x, y, r, fill]) => (
          <circle key={`${x}-${y}`} cx={x} cy={y} r={r} fill={fill} />
        ))}
      </>
    ),
  },
]

const App = () => {
  const [tiled, setTiled] = useState(true)
  const [showTitle, setShowTitle] = useState(false)

  return (
    <Window>
      <GlobalStyle />
      <TitleBar>
        <TableauLogo />
        <WindowTitle>Tableau - 문서7 - 14일 후 Tableau 라이선스 만료</WindowTitle>
        <WindowButtons>
          <WindowButton aria-label="최소화">
            <Icon size={13}><path d="M0 6.500h13" /></Icon>
          </WindowButton>
          <WindowButton aria-label="이전 크기로">
            <Icon size={13}><path d="M.500 3.500h9v9h-9zM3 .500h7.500a2 2 0 0 1 2 2V10" /></Icon>
          </WindowButton>
          <WindowButton aria-label="닫기">
            <Icon size={13}><path d="M.500.500l12 12M12.500.500l-12 12" /></Icon>
          </WindowButton>
        </WindowButtons>
      </TitleBar>

      <MenuBar>
        {menus.map((menu) => (
          <MenuItem key={menu}>{menu}</MenuItem>
        ))}
      </MenuBar>

      <ToolBar>
        <Tool name="home" label="홈" />
        <Separator />
        <Tool name="back" label="실행 취소" />
        <Tool name="forward" label="다시 실행" disabled />
        <Tool name="redo" label="재생" caret />
        <Tool name="save" label="저장" />
        <Tool name="addData" label="새 데이터 원본" />
        <Tool name="pauseData" label="자동 업데이트 일시 중지" caret />
        <Tool name="refresh" label="업데이트 실행" disabled caret />
        <Separator />
        <Tool name="newSheet" label="새 워크시트" caret />
        <Tool name="duplicate" label="복제" />
        <Tool name="clear" label="시트 지우기" caret />
        <Separator />
        <Tool name="swap" label="행과 열 바꾸기" disabled />
        <Tool name="sortAsc" label="오름차순 정렬" disabled />
        <Tool name="sortDesc" label="내림차순 정렬" disabled />
        <Separator />
        <Tool name="highlight" label="하이라이트" caret />
        <Tool name="clip" label="그룹" disabled caret />
        <Tool name="label" label="레이블 표시" disabled />
        <Tool name="pin" label="축 고정" disabled />
        <FitSelect>
          <select aria-label="맞춤" disabled />
          <Caret />
        </FitSelect>
        <Separator />
        <Tool name="cards" label="카드 표시" disabled caret />
        <Tool name="present" label="프레젠테이션 모드" />
        <Separator />
        <Tool name="share" label="공유" />
        <Spacer />
        <Tool name="einstein" label="도우미" disabled />
        <Tool name="signpost" label="데이터 가이드" />
        <ShowMeTab>
          <svg width="15" height="16" viewBox="0 0 15 16">
            <Rects list={[[0, 0, 11, 3, "#866f9a"], [0, 4, 14, 3, "#7ea6cf"], [0, 8, 5, 3, "#f3a683"], [0, 12, 8, 3, "#ff6f7d"]]} />
          </svg>
          표현 방식
        </ShowMeTab>
      </ToolBar>

      <Main>
        <Side>
          <SideTabs>
            <SideTab $active>대시보드</SideTab>
            <SideTab>레이아웃</SideTab>
            <CollapseButton aria-label="패널 접기">
              <Icon size={14} width={1.5}><path d="M9 2L5 7l4 5" /></Icon>
            </CollapseButton>
          </SideTabs>

          <DeviceSection>
            <Device $active>기본값</Device>
            <Device>휴대폰</Device>
            <PreviewButton>기기 미리 보기</PreviewButton>
          </DeviceSection>

          <Section>
            <SectionTitle>크기</SectionTitle>
            <SizeSelect>
              <select aria-label="크기">
                <option>데스크톱 브라우저(1000 x 800)</option>
              </select>
              <Caret />
            </SizeSelect>
          </Section>

          <SheetSection>
            <SectionTitle>시트</SectionTitle>
            <SheetList>
              <SheetItem><SheetIcon />시트 1</SheetItem>
              <SheetItem><SheetIcon />시트 2</SheetItem>
            </SheetList>
          </SheetSection>

          <ObjectSection>
            <ObjectTitle>개체</ObjectTitle>
            <ObjectBox>
              <ObjectList>
                {objectItems.map((item) => (
                  <ObjectItem key={item.label}>
                    <Icon size={17}>{item.icon}</Icon>
                    {item.label}
                  </ObjectItem>
                ))}
              </ObjectList>
              <ScrollBar>
                <Caret up />
                <ScrollThumb />
                <Caret />
              </ScrollBar>
            </ObjectBox>
            <LayoutSwitch>
              <LayoutButton $active={tiled} onClick={() => setTiled(true)}>바둑판식</LayoutButton>
              <LayoutButton $active={!tiled} onClick={() => setTiled(false)}>부동</LayoutButton>
            </LayoutSwitch>
            <CheckLabel>
              <input type="checkbox" checked={showTitle} onChange={() => setShowTitle(!showTitle)} />
              대시보드 제목 표시
            </CheckLabel>
          </ObjectSection>
        </Side>

        <Workspace>
          <Dashboard>
            <TitleZone>
              <h2>대시보드 만들기</h2>
            </TitleZone>
            <SheetRow>
              <SheetZone>
                <h3>비율 그래프</h3>
                <PieChart />
              </SheetZone>
              <SheetZone>
                <h3>시트 2</h3>
                <BarChart />
              </SheetZone>
            </SheetRow>
          </Dashboard>
        </Workspace>

        <ShowMe>
          <ThumbGrid>
            {thumbs.map((thumb) => (
              <Thumb key={thumb.label} aria-label={thumb.label}>
                <svg width="67" height="50" viewBox="3 3 201 150">{thumb.art}</svg>
              </Thumb>
            ))}
          </ThumbGrid>
          <ShowMeHint>뷰 선택</ShowMeHint>
        </ShowMe>

        {/* hand drawn arrows from the sheet list to the charts */}
        <Ink width="760" height="400" viewBox="0 0 760 400">
          <path d="M104 287C118 281 130 279 138 279C152 279 165 287 181 291C195 295 205 296 213 300C224 306 231 311 235 315C240 323 242 328 247 335C258 347 268 352 276 354C286 359 290 359 298 359" />
          <path d="M302 344v20M303 339C310 342 315 346 315 351C313 359 306 365 301 372" />
          <path d="M104 323H135C160 322 175 319 200 319H290C310 318 325 314 345 313C365 311 380 310 395 310C405 309 410 307 425 307H492C510 305 560 305 585 305.500C600 306 615 307 621 309C640 314 655 316 671 320C685 324 692 328 705 328C715 328.500 720 328 728 327.500" />
          <path d="M725 320C731 323 738 327 739 331C737 337 731 341 727 340V337L729 324" />
        </Ink>
      </Main>

      <SheetTabs>
        <SheetTab $wide>
          <Icon size={14}><path d="M3.500 3.500v7c0 2 7 2 7 0v-7c0-2-7-2-7 0c0 2 7 2 7 0" /></Icon>
          데이터 원본
        </SheetTab>
        <SheetTab>시트 1</SheetTab>
        <SheetTab>시트 2</SheetTab>
        <SheetTab $active>
          <Icon size={12}><path d="M.500 1.500h11v9H.500zM6 1.500v9M.500 6h11" /></Icon>
          대시보드 1
        </SheetTab>
        <SheetTab $icon aria-label="새 워크시트">
          <Icon size={18}><path d="M9 12.500H2.500v-10h10V8M5.500 10V8M7.500 10V6M9.500 10V5" /><path d="M9 13.500h8M13 9.500v8" strokeWidth="2" /></Icon>
        </SheetTab>
        <SheetTab $icon aria-label="새 대시보드">
          <Icon size={18}><path d="M9 12.500H2.500v-10h10V8M2.500 7.500h10M7.500 2.500v10" /><path d="M9 13.500h8M13 9.500v8" strokeWidth="2" /></Icon>
        </SheetTab>
        <SheetTab $icon aria-label="새 스토리">
          <Icon size={18}><path d="M9 12.500l-1.500 1-5-2v-9l5 2 5-2V8M7.500 4.500v9" /><path d="M9 13.500h8M13 9.500v8" strokeWidth="2" /></Icon>
        </SheetTab>
      </SheetTabs>

      <StatusBar>
        <StatusCell $width={157} />
        <StatusCell $width={32} />
        <StatusCell $width={32} />
        <StatusCell $width={57} />
        <StatusCell $width={71} $pad={8}>
          <svg width="54" height="8" viewBox="0 0 54 8" fill="currentColor">
            <path d="M0 0h1v8H0zM6 1v6L2 4zM21 1v6l-4-3zM33 1v6l4-3zM48 1v6l4-3zM53 0h1v8h-1z" />
          </svg>
        </StatusCell>
        <StatusCell $width={70} $pad={7}>
          <svg width="11" height="11" viewBox="0 0 11 11" fill="currentColor">
            <path d="M0 0h3v3H0zM4 0h3v3H4zM8 0h3v3H8zM0 4h3v3H0zM4 4h3v3H4zM8 4h3v3H8zM0 8h3v3H0zM4 8h3v3H4zM8 8h3v3H8z" />
          </svg>
          <svg width="11" height="11" viewBox="0 0 11 11" fill="currentColor">
            <path d="M0 0h11v7H0zM0 8h3v3H0zM4 8h3v3H4zM8 8h3v3H8z" />
          </svg>
          <svg width="11" height="11" viewBox="0 0 11 11" fill="#666">
            <path d="M0 0h11v11H0z" />
          </svg>
        </StatusCell>
      </StatusBar>
    </Window>
  )
}

export default App
